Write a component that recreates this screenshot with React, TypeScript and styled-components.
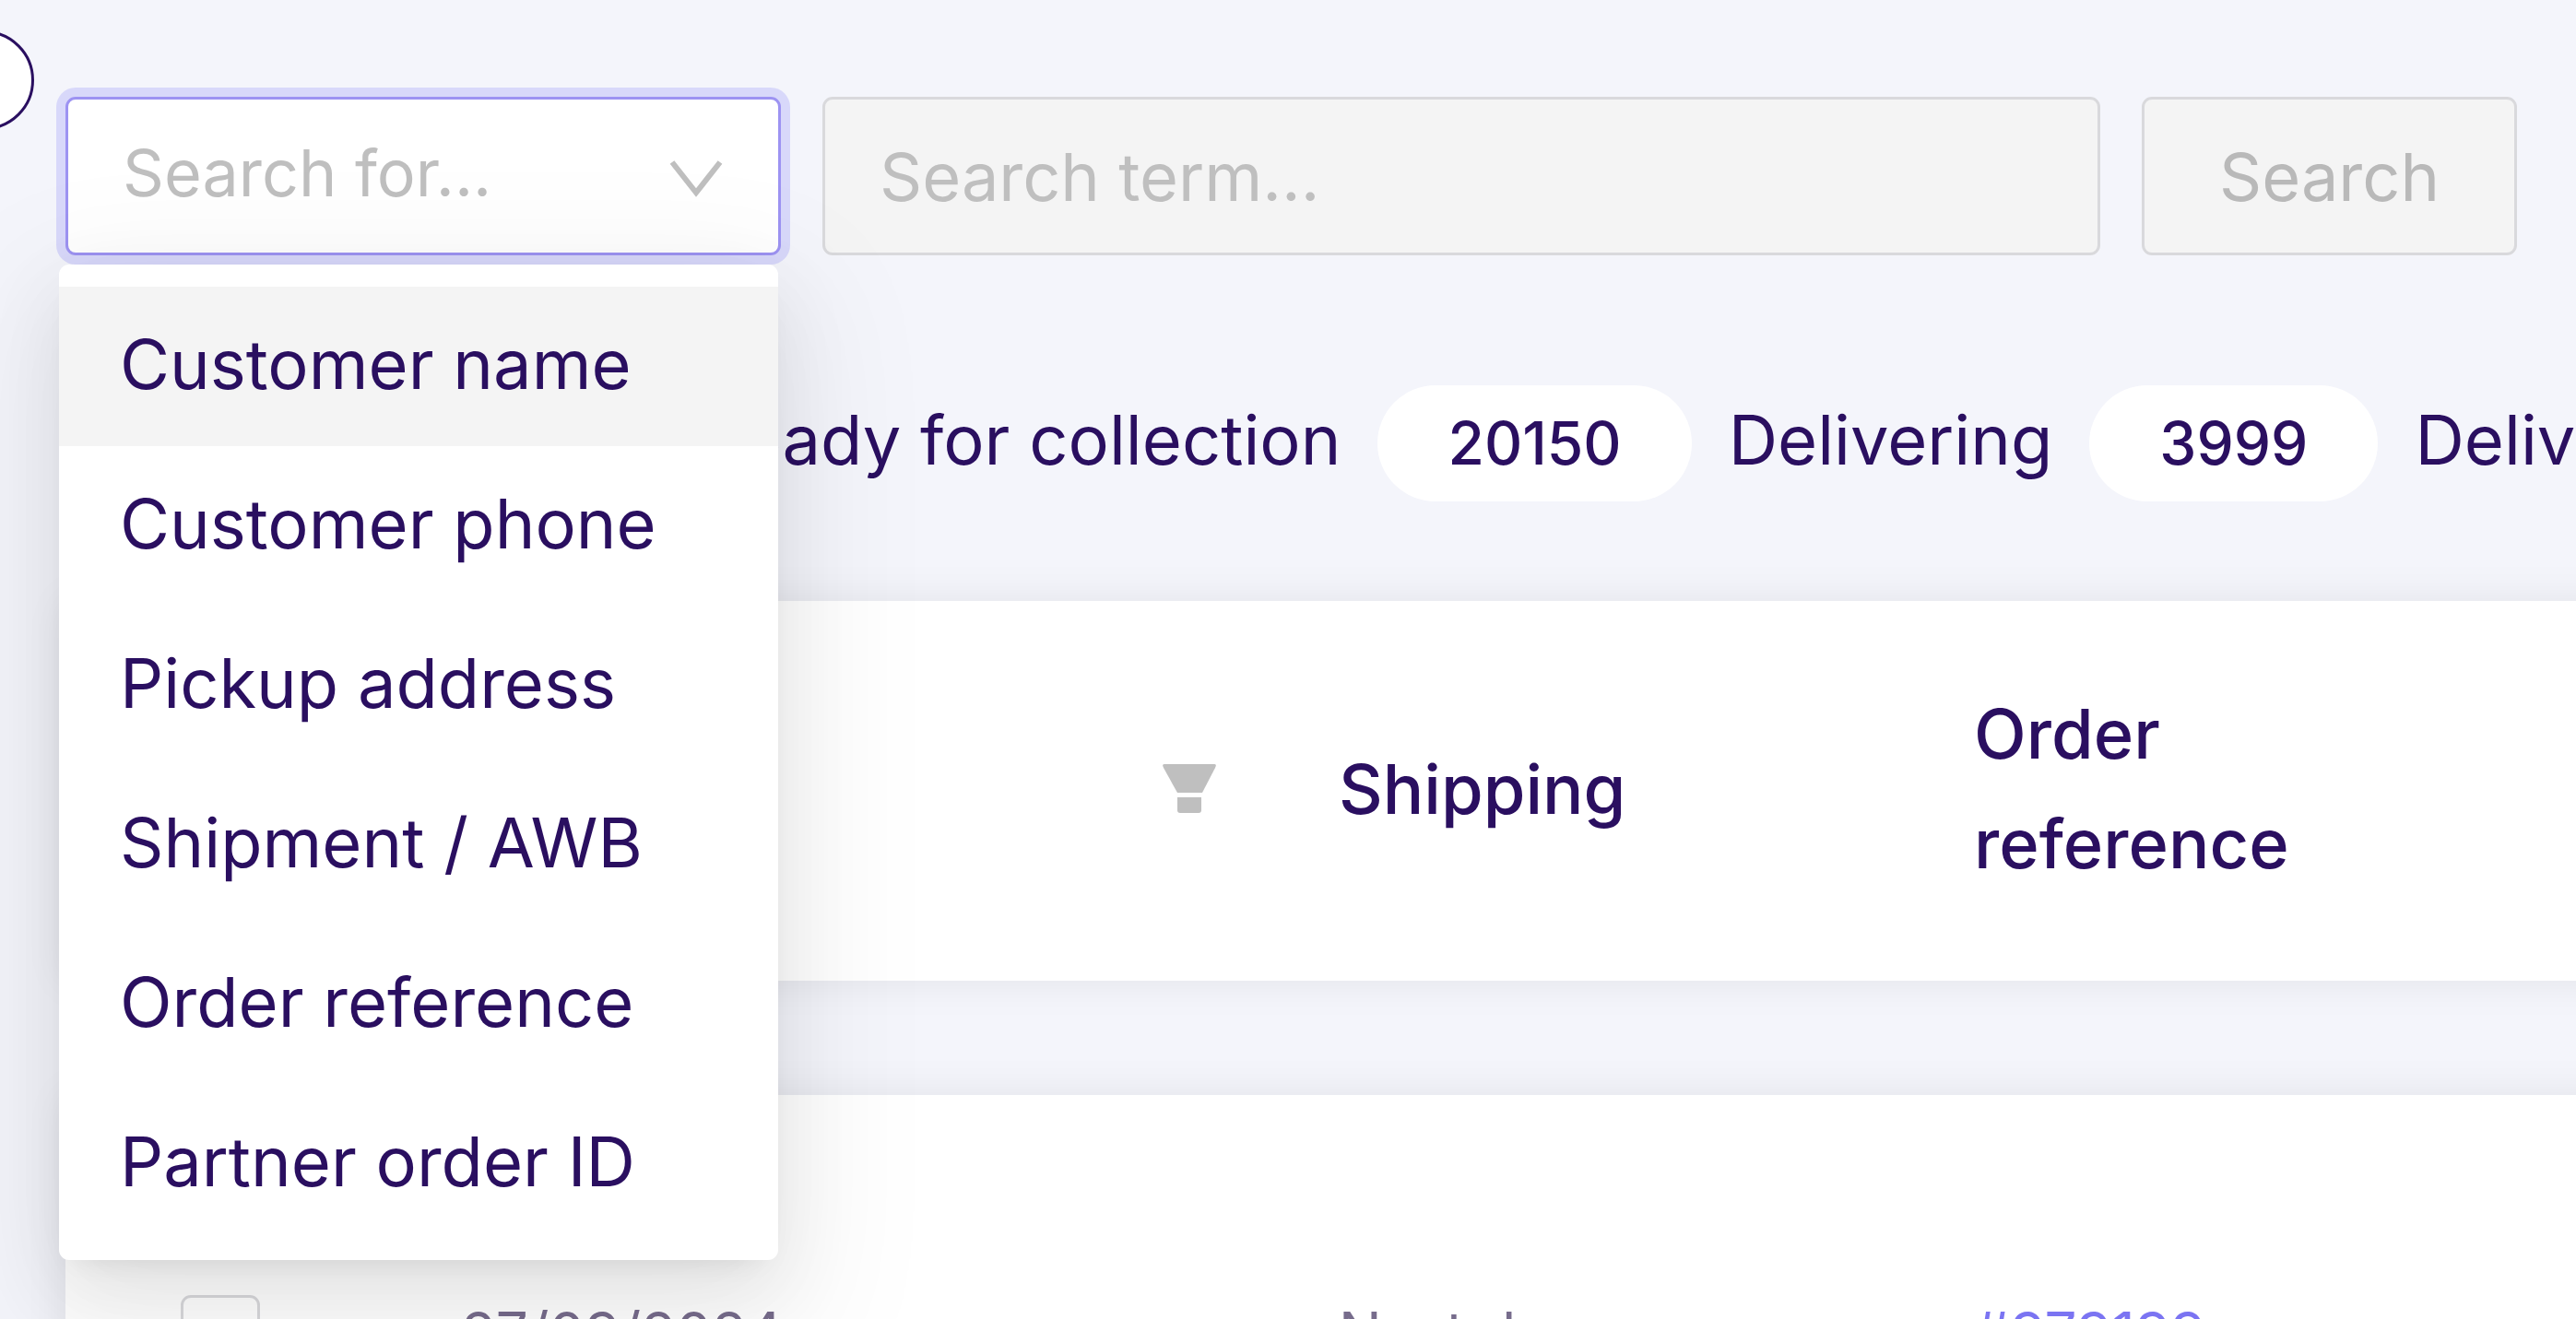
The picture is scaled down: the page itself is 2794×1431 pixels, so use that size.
import React from "react";
import styled, { createGlobalStyle, css } from "styled-components";

const ink = "#2a0f60";
const placeholder = "#bfbfbf";
const line = "#d9d9dc";
const disabledFill = "#f4f4f4";

const GlobalStyle = createGlobalStyle`
  *, *::before, *::after { box-sizing: border-box; }
  body {
    margin: 0;
    background: #f4f5fb;
    color: ${ink};
    font-family: Inter, "Liberation Sans", sans-serif;
    font-size: 74px;
  }
`;

const Page = styled.main`
  position: relative;
  height: 100vh;
  overflow: hidden;
  padding: 105px 0 0 71px;
`;

const CollapseHandle = styled.button`
  position: absolute;
  top: 33px;
  left: -71px;
  width: 108px;
  height: 108px;
  padding: 0;
  border: 3px solid ${ink};
  border-radius: 50%;
  background: #fff;
`;

const SearchBar = styled.form`
  display: flex;
  gap: 45px;
  height: 172px;
  padding-right: 64px;
`;

const fieldBase = css`
  height: 100%;
  margin: 0;
  border: 3px solid ${line};
  border-radius: 11px;
  font-family: inherit;
  font-size: 72px;
`;

const SelectWrap = styled.div`
  position: relative;
  flex: 0 0 776px;
`;

const FieldSelect = styled.select`
  ${fieldBase}
  width: 100%;
  padding: 0 160px 8px 59px;
  appearance: none;
  border-color: #9d93f2;
  background: #fff;
  color: ${placeholder};
  font-size: 70px;
  outline: none;
  box-shadow: 0 0 0 10px #d8d8fa;
`;

const Chevron = styled.svg`
  position: absolute;
  top: 68px;
  right: 62px;
  width: 60px;
  height: 42px;
  pointer-events: none;
`;

const Menu = styled.ul`
  position: absolute;
  z-index: 2;
  top: 182px;
  left: -7px;
  width: 780px;
  margin: 0;
  padding: 24px 0 18px;
  list-style: none;
  border-radius: 11px;
  background: #fff;
  box-shadow:
    0 16px 32px -22px rgba(0, 0, 0, 0.12),
    0 32px 86px rgba(0, 0, 0, 0.08),
    0 48px 150px 43px rgba(0, 0, 0, 0.05);
`;

const MenuItem = styled.li<{ $active: boolean }>`
  padding: 0 66px 4px;
  line-height: 169px;
  white-space: nowrap;
  background: ${(p) => (p.$active ? disabledFill : "transparent")};
`;

const TermInput = styled.input`
  ${fieldBase}
  flex: 1;
  min-width: 0;
  padding: 0 59px;
  background: ${disabledFill};
  &::placeholder {
    color: ${placeholder};
    opacity: 1;
  }
`;

const SearchButton = styled.button`
  ${fieldBase}
  flex: 0 0 407px;
  padding: 0;
  background: ${disabledFill};
  color: #b9b9b9;
`;

const Stats = styled.div`
  display: flex;
  align-items: baseline;
  gap: 40px;
  margin-top: 141px;
  padding-left: 687px;
  white-space: nowrap;
`;

const Count = styled.span`
  padding: 0 76px;
  border-radius: 63px;
  background: #fff;
  font-size: 64px;
  font-weight: 500;
  line-height: 126px;
`;

const Table = styled.table`
  display: block;
  margin-top: 108px;
`;

const Head = styled.thead`
  display: block;
`;

const Body = styled.tbody`
  display: block;
  margin-top: 124px;
`;

const Row = styled.tr<{ $height: number }>`
  display: grid;
  grid-template-columns: 363px 952px 689px 1fr;
  min-height: ${(p) => p.$height}px;
  margin-right: -64px;
  background: #fff;
  box-shadow: 0 0 43px rgba(0, 0, 0, 0.08);
`;

const HeadCell = styled.th`
  display: flex;
  align-items: center;
  padding: 0 66px 4px;
  font-weight: 500;
  line-height: 119px;
  text-align: left;
`;

const FilterCell = styled(HeadCell)`
  justify-content: flex-end;
`;

const FilterButton = styled.button`
  display: flex;
  padding: 0;
  border: 0;
  background: none;
`;

const Cell = styled.td`
  display: flex;
  align-items: center;
  padding: 0 66px 6px;
  color: #776c8c;
  font-size: 62px;
`;

const CheckCell = styled(Cell)`
  padding: 0 125px;
`;

const Checkbox = styled.input`
  width: 86px;
  height: 86px;
  margin: 0;
  appearance: none;
  border: 3px solid ${line};
  border-radius: 11px;
  background: #fff;
`;

const OrderLink = styled.a`
  color: #7b74f2;
  text-decoration: none;
`;

const options = [
  "Customer name",
  "Customer phone",
  "Pickup address",
  "Shipment / AWB",
  "Order reference",
  "Partner order ID",
];

export default function App() {
  return (
    <>
      <GlobalStyle />
      <Page>
        <CollapseHandle type="button" />
        <SearchBar>
          <SelectWrap>
            <FieldSelect aria-label="Search for..." defaultValue="">
              <option value="">Search for...</option>
            </FieldSelect>
            <Chevron viewBox="0 0 60 42" fill="none">
              <path d="M4 3 L30 36 L56 3" stroke={placeholder} strokeWidth="6" />
            </Chevron>
            <Menu role="listbox">
              {options.map((name, i) => (
                <MenuItem key={name} role="option" aria-selected={i === 0} $active={i === 0}>
                  {name}
                </MenuItem>
              ))}
            </Menu>
          </SelectWrap>
          <TermInput aria-label="Search term..." placeholder="Search term..." disabled />
          <SearchButton type="submit" disabled>
            Search
          </SearchButton>
        </SearchBar>
        <Stats>
          <span>Ready for collection</span>
          <Count>20150</Count>
          <span>Delivering</span>
          <Count>3999</Count>
          <span>Delivered</span>
        </Stats>
        <Table>
          <Head>
            <Row $height={412}>
              <HeadCell />
              <FilterCell>
                <FilterButton type="button">
                  <svg width="60" height="54" viewBox="0 0 60 54" fill={placeholder}>
                    <path d="M3 0 H57 Q60 0 58 4 L44 31 H17 L2 4 Q0 0 3 0 Z" />
                    <path d="M17 36 H43 V50 Q43 53 40 53 H20 Q17 53 17 50 Z" />
                  </svg>
                </FilterButton>
              </FilterCell>
              <HeadCell>Shipping</HeadCell>
              <HeadCell>
                Order
                <br />
                reference
              </HeadCell>
            </Row>
          </Head>
          <Body>
            <Row $height={520}>
              <CheckCell>
                <Checkbox type="checkbox" aria-label="27/09/2024" />
              </CheckCell>
              <Cell>27/09/2024</Cell>
              <Cell>Next day</Cell>
              <Cell>
                <OrderLink href="#order">#979199</OrderLink>
              </Cell>
            </Row>
          </Body>
        </Table>
      </Page>
    </>
  );
}
